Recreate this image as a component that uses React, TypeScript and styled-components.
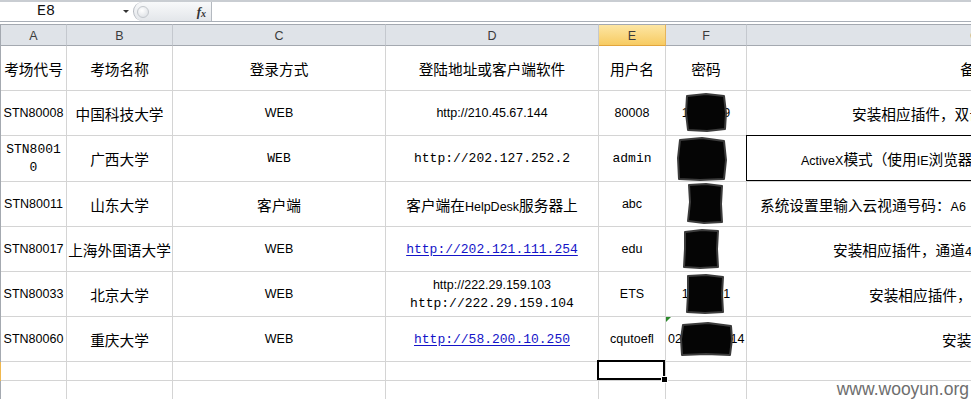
import React from 'react'
import styled, { createGlobalStyle, css } from 'styled-components'

const GlobalStyle = createGlobalStyle`
  html, body {
    margin: 0;
    padding: 0;
    background: #fff;
    overflow: hidden;
  }
  body {
    font-family: "Liberation Sans", "Noto Sans CJK SC", sans-serif;
  }
`

type Face = 'cjk' | 'cal' | 'mono'

const faces = {
  cjk: css`
    font-family: "Noto Sans CJK SC", sans-serif;
    font-size: 14.67px;
  `,
  cal: css`
    font-family: "Liberation Sans", "Noto Sans CJK SC", sans-serif;
    font-size: 12.5px;
  `,
  mono: css`
    font-family: "Liberation Mono", "Noto Sans CJK SC", monospace;
    font-size: 13px;
  `,
}

const Screen = styled.div`
  position: relative;
  width: 971px;
  height: 399px;
  overflow: hidden;
`

const FormulaBar = styled.div`
  display: flex;
  height: 22px;
  box-sizing: border-box;
  border-top: 2px solid #c9cdd2;
  border-bottom: 1px solid #a9afb7;
`

const NameBox = styled.div`
  width: 133px;
  display: flex;
  align-items: center;
  box-sizing: border-box;
  padding: 0 4px 0 37px;
  font-family: "Liberation Mono", monospace;
  font-size: 15px;
  color: #111;
`

const DropArrow = styled.span`
  margin-left: auto;
  width: 0;
  height: 0;
  border-left: 3px solid transparent;
  border-right: 3px solid transparent;
  border-top: 3px solid #333;
`

const FxBox = styled.div`
  width: 79px;
  display: flex;
  align-items: center;
  justify-content: space-between;
  box-sizing: border-box;
  padding: 0 5px 0 3px;
  background: linear-gradient(#f8f9fa, #e3e6ea);
  border-left: 1px solid #b4b9c0;
  border-right: 1px solid #b4b9c0;
  border-radius: 10px 0 0 10px;
`

const Knob = styled.span`
  width: 10px;
  height: 10px;
  border-radius: 50%;
  border: 1px solid #c3c7cc;
  background: radial-gradient(circle at 40% 35%, #ffffff, #d7dbe0);
`

const Fx = styled.span`
  font-family: "Liberation Serif", serif;
  font-style: italic;
  font-weight: bold;
  font-size: 13px;
  color: #333;

  sub {
    font-size: 10px;
    vertical-align: -1px;
  }
`

const FormulaInput = styled.div`
  flex: 1;
  background: #fff;
`

const Sheet = styled.div`
  display: grid;
  grid-template-columns: 1px 66px 106px 213px 213px 67px 81px 457px;
  grid-template-rows: 22px 45px 45px 46px 45px 45px 45px 45px 19px 20px;
  width: 1204px;
  margin-top: 2px;
`

const Stub = styled.div<{ $active?: boolean }>`
  background: ${(p) => (p.$active ? '#f0b84e' : '#a4a9b0')};
`

const ColHead = styled.div<{ $active?: boolean }>`
  box-sizing: border-box;
  display: flex;
  align-items: center;
  justify-content: center;
  padding-top: 2px;
  border-top: 1px solid #a4a9b0;
  border-bottom: 1px solid ${(p) => (p.$active ? '#e2a53c' : '#a4a9b0')};
  border-right: 1px solid ${(p) => (p.$active ? '#e5b45a' : '#c4c8ce')};
  background: ${(p) => (p.$active ? 'linear-gradient(#fde6a4, #f7cb62)' : '#dfe3e8')};
  font-size: 12.5px;
  color: #3b3b3b;
`

const Cell = styled.div<{
  $face?: Face
  $left?: boolean
  $indent?: number
  $boxed?: boolean
  $selected?: boolean
  $flag?: boolean
}>`
  position: relative;
  box-sizing: border-box;
  display: flex;
  flex-direction: column;
  align-items: ${(p) => (p.$left || p.$indent !== undefined ? 'flex-start' : 'center')};
  justify-content: center;
  padding-left: ${(p) => p.$indent ?? (p.$left ? 2 : 0)}px;
  border-right: 1px solid #d4d4d4;
  border-bottom: 1px solid #d4d4d4;
  white-space: nowrap;
  color: #000;
  ${(p) => faces[p.$face ?? 'cal']}

  ${(p) =>
    p.$boxed &&
    css`
      &::after {
        content: '';
        position: absolute;
        top: -1px;
        left: -1px;
        right: 0;
        bottom: 0;
        border: 1px solid #000;
      }
    `}

  ${(p) =>
    p.$selected &&
    css`
      &::after {
        content: '';
        position: absolute;
        top: -2px;
        left: -2px;
        right: 0;
        bottom: 0;
        border: 2px solid #000;
      }
      &::before {
        content: '';
        position: absolute;
        right: -3px;
        bottom: -3px;
        width: 5px;
        height: 5px;
        background: #000;
        border: 1px solid #fff;
        z-index: 1;
      }
    `}

  ${(p) =>
    p.$flag &&
    css`
      &::before {
        content: '';
        position: absolute;
        top: 0;
        left: 0;
        border-top: 5px solid #2b8a2b;
        border-right: 5px solid transparent;
      }
    `}
`

const Line = styled.span<{ $face?: Face }>`
  line-height: ${(p) => (p.$face === 'mono' ? 18 : 20)}px;
  ${(p) => p.$face && faces[p.$face]}
`

const Lat = styled.span`
  font-family: "Liberation Sans", sans-serif;
  font-size: 12.5px;
`

const Link = styled.span`
  color: #1414c8;
  text-decoration: underline;
  text-underline-offset: 2px;
`

const Blot = styled.svg`
  position: absolute;
  left: 0;
  top: 0;
  overflow: visible;
  pointer-events: none;

  path {
    fill: #050505;
    stroke: #3c3c3c;
    stroke-width: 2;
    stroke-linejoin: round;
  }
`

const Watermark = styled.div`
  position: absolute;
  right: 2px;
  bottom: 1px;
  font-family: "Liberation Sans", sans-serif;
  font-size: 17.5px;
  line-height: 1;
  color: #6e6e6e;
`

interface Rec {
  code: string[]
  codeFace: Face
  name: string
  login: string
  loginFace: Face
  addr: React.ReactNode
  addrFace: Face
  user: string
  userFace: Face
  pwd?: string
  pwdLeft?: boolean
  flag?: boolean
  blot: string
  note: React.ReactNode
  indent: number
  boxed?: boolean
}

const records: Rec[] = [
  {
    code: ['STN80008'],
    codeFace: 'cal',
    name: '中国科技大学',
    login: 'WEB',
    loginFace: 'cal',
    addr: 'http://210.45.67.144',
    addrFace: 'cal',
    user: '80008',
    userFace: 'cal',
    pwd: '1234569',
    blot: 'M21 5 L40 3 L58 5 L60 22 L59 38 L41 40 L22 39 L20 22 Z',
    note: '安装相应插件，双击',
    indent: 105,
  },
  {
    code: ['STN8001', '0'],
    codeFace: 'mono',
    name: '广西大学',
    login: 'WEB',
    loginFace: 'mono',
    addr: 'http://202.127.252.2',
    addrFace: 'mono',
    user: 'admin',
    userFace: 'mono',
    blot: 'M14 4 L36 2 L58 5 L60 24 L58 43 L34 44 L13 43 L12 22 Z',
    note: (
      <span>
        <Lat>ActiveX</Lat>模式（使用<Lat>IE</Lat>浏览器
      </span>
    ),
    indent: 54,
    boxed: true,
  },
  {
    code: ['STN80011'],
    codeFace: 'cal',
    name: '山东大学',
    login: '客户端',
    loginFace: 'cjk',
    addr: (
      <span>
        客户端在<Lat>HelpDesk</Lat>服务器上
      </span>
    ),
    addrFace: 'cjk',
    user: 'abc',
    userFace: 'cal',
    blot: 'M23 3 L40 2 L56 4 L55 22 L56 40 L38 41 L22 39 L24 20 Z',
    note: (
      <span>
        系统设置里输入云视通号码：<Lat>A6</Lat>
      </span>
    ),
    indent: 13,
  },
  {
    code: ['STN80017'],
    codeFace: 'cal',
    name: '上海外国语大学',
    login: 'WEB',
    loginFace: 'cal',
    addr: <Link>http://202.121.111.254</Link>,
    addrFace: 'mono',
    user: 'edu',
    userFace: 'cal',
    blot: 'M19 5 L36 3 L52 4 L51 22 L52 40 L34 41 L18 40 L19 22 Z',
    note: (
      <span>
        安装相应插件，通道<Lat>4</Lat>
      </span>
    ),
    indent: 86,
  },
  {
    code: ['STN80033'],
    codeFace: 'cal',
    name: '北京大学',
    login: 'WEB',
    loginFace: 'cal',
    addr: (
      <>
        <Line $face="cal">http://222.29.159.103</Line>
        <Line $face="mono">http://222.29.159.104</Line>
      </>
    ),
    addrFace: 'cal',
    user: 'ETS',
    userFace: 'cal',
    pwd: '1000001',
    blot: 'M22 4 L40 3 L57 5 L56 22 L57 40 L39 41 L21 40 L22 22 Z',
    note: '安装相应插件，',
    indent: 122,
  },
  {
    code: ['STN80060'],
    codeFace: 'cal',
    name: '重庆大学',
    login: 'WEB',
    loginFace: 'cal',
    addr: <Link>http://58.200.10.250</Link>,
    addrFace: 'mono',
    user: 'cqutoefl',
    userFace: 'cal',
    pwd: '02000000014',
    pwdLeft: true,
    flag: true,
    blot: 'M17 8 L42 6 L65 9 L66 22 L64 38 L40 37 L16 38 L15 22 Z',
    note: '安装',
    indent: 195,
  },
]

const heads = ['考场代号', '考场名称', '登录方式', '登陆地址或客户端软件', '用户名', '密码', '备注']
const letters = ['A', 'B', 'C', 'D', 'E', 'F', 'G']

export default function App() {
  return (
    <Screen>
      <GlobalStyle />
      <FormulaBar>
        <NameBox>
          E8
          <DropArrow />
        </NameBox>
        <FxBox>
          <Knob />
          <Fx>
            f<sub>x</sub>
          </Fx>
        </FxBox>
        <FormulaInput />
      </FormulaBar>

      <Sheet>
        <Stub />
        {letters.map((l) => (
          <ColHead key={l} $active={l === 'E'}>
            {l}
          </ColHead>
        ))}

        <Stub />
        {heads.map((h) => (
          <Cell key={h} $face="cjk">
            {h}
          </Cell>
        ))}

        {records.map((r) => (
          <React.Fragment key={r.code.join('')}>
            <Stub />
            <Cell $face={r.codeFace}>
              {r.code.map((c) => (
                <Line key={c} $face={r.codeFace === 'mono' ? 'mono' : undefined}>
                  {c}
                </Line>
              ))}
            </Cell>
            <Cell $face="cjk">{r.name}</Cell>
            <Cell $face={r.loginFace}>{r.login}</Cell>
            <Cell $face={r.addrFace}>{r.addr}</Cell>
            <Cell $face={r.userFace}>{r.user}</Cell>
            <Cell $face="cal" $left={r.pwdLeft} $flag={r.flag}>
              {r.pwd}
              <Blot width="81" height="46">
                <path d={r.blot} />
              </Blot>
            </Cell>
            <Cell $face="cjk" $indent={r.indent} $boxed={r.boxed}>
              {r.note}
            </Cell>
          </React.Fragment>
        ))}

        <Stub $active />
        <Cell />
        <Cell />
        <Cell />
        <Cell />
        <Cell $selected />
        <Cell />
        <Cell />

        <Stub />
        <Cell />
        <Cell />
        <Cell />
        <Cell />
        <Cell />
        <Cell />
        <Cell />
      </Sheet>

      <Watermark>www.wooyun.org</Watermark>
    </Screen>
  )
}
